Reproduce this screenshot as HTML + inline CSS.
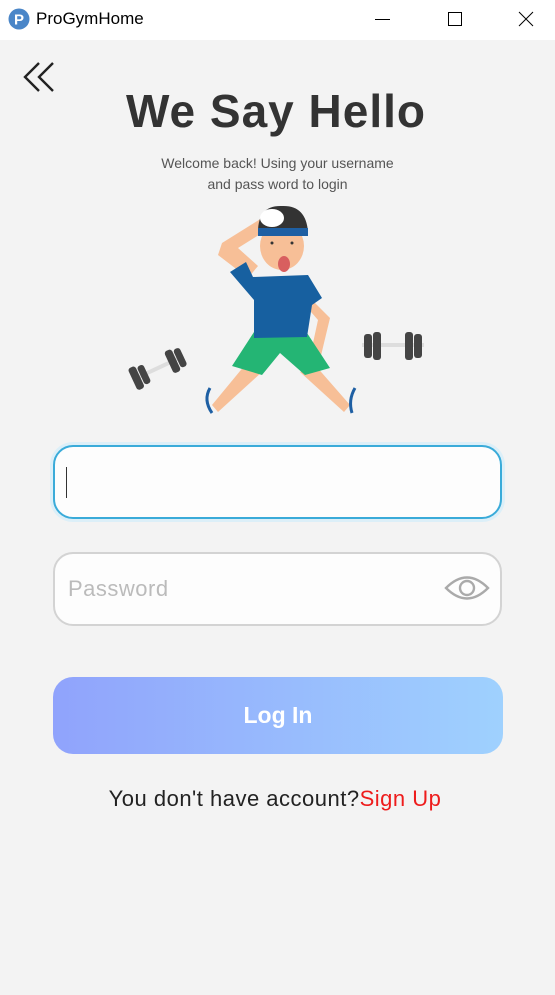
<!DOCTYPE html>
<html><head><meta charset="utf-8"><style>
*{margin:0;padding:0;box-sizing:border-box}
body{width:555px;height:995px;background:#f3f3f3;font-family:"Liberation Sans",sans-serif;position:relative;overflow:hidden}
.tb{position:absolute;left:0;top:0;width:555px;height:40px;background:#fff}
.abs{position:absolute}
.field{position:absolute;left:53px;width:449px;height:74px;border-radius:20px;background:#fdfdfd}
</style></head><body>
<div class="tb">
<svg class="abs" style="left:8px;top:8px" width="22" height="22"><circle cx="11" cy="11" r="10.5" fill="#4a86c8"/><text x="11" y="16.5" font-family="Liberation Sans" font-weight="bold" font-size="15" fill="#fff" text-anchor="middle">P</text></svg>
<div class="abs" style="left:36px;top:9px;font-size:17px;color:#000">ProGymHome</div>
<svg class="abs" style="left:370px;top:10px" width="170" height="20"><line x1="5" y1="9.5" x2="20" y2="9.5" stroke="#000"/><rect x="78.5" y="2.5" width="13" height="13" fill="none" stroke="#000"/><path d="M149 2L163 16M163 2L149 16" stroke="#000"/></svg>
</div>
<svg class="abs" style="left:22px;top:60px" width="36" height="34"><path d="M17 3L3 17L17 31M31 3L17 17L31 31" stroke="#222" stroke-width="2.4" fill="none"/></svg>
<div class="abs" style="left:0;width:552px;top:84px;text-align:center;font-size:46px;font-weight:bold;color:#333;letter-spacing:1px">We Say Hello</div>
<div class="abs" style="left:0;width:555px;top:153px;text-align:center;font-size:14px;line-height:21px;color:#555">Welcome back! Using your username<br>and pass word to login</div>
<svg class="abs" style="left:0;top:0" width="555" height="430">
<g transform="rotate(-25 158 368)" fill="#444"><rect x="130" y="366" width="56" height="4" fill="#ddd"/><rect x="130" y="356" width="8" height="24" rx="3"/><rect x="139" y="358" width="7" height="20" rx="3"/><rect x="170" y="356" width="8" height="24" rx="3"/><rect x="179" y="358" width="7" height="20" rx="3"/></g>
<rect x="362" y="343" width="62" height="4" fill="#ddd"/>
<rect x="364" y="334" width="8" height="24" rx="3" fill="#444"/><rect x="373" y="332" width="8" height="28" rx="3" fill="#444"/>
<rect x="405" y="332" width="8" height="28" rx="3" fill="#444"/><rect x="414" y="334" width="8" height="24" rx="3" fill="#444"/>
<path d="M245 365L212 405L218 412L262 372Z" fill="#f7bf97"/>
<path d="M315 365L350 405L344 412L300 372Z" fill="#f7bf97"/>
<path d="M210 388Q203 400 212 413" stroke="#1e5fa3" stroke-width="3" fill="none"/>
<path d="M355 388Q348 400 352 413" stroke="#1e5fa3" stroke-width="3" fill="none"/>
<path d="M248 278L218 255L222 243L262 218L270 228L238 248L258 266Z" fill="#f7bf97"/>
<path d="M312 300L330 318L318 368L308 366L318 320L305 305Z" fill="#f7bf97"/>
<path d="M254 332L307 333L330 368L305 375L280 353L262 375L232 366Z" fill="#24b574"/>
<path d="M253 277L308 275L322 298L312 305L307 337L254 338L254 300L230 272L246 262Z" fill="#1760a0"/>
<ellipse cx="282" cy="246" rx="22" ry="24" fill="#f7bf97"/>
<path d="M258 232Q258 205 282 206Q306 205 308 232Z" fill="#333"/>
<rect x="258" y="228" width="50" height="8" fill="#1e5fa3"/>
<ellipse cx="272" cy="218" rx="12" ry="9" fill="#fff"/>
<ellipse cx="284" cy="264" rx="6" ry="8" fill="#d85f5f"/>
<circle cx="272" cy="243" r="1.5" fill="#333"/><circle cx="292" cy="243" r="1.5" fill="#333"/>
</svg>
<div class="field" style="top:445px;border:2px solid #3aabd9;box-shadow:0 0 0 3px #dceff8"></div>
<div class="abs" style="left:66px;top:467px;width:1px;height:31px;background:#333"></div>
<div class="field" style="top:552px;border:2px solid #d3d3d3"></div>
<div class="abs" style="left:68px;top:576px;font-size:22px;color:#bbb;letter-spacing:0.5px">Password</div>
<svg class="abs" style="left:444px;top:573px" width="46" height="30"><path d="M2 15Q23 -6 44 15Q23 36 2 15Z" fill="none" stroke="#aaa" stroke-width="2.4"/><circle cx="23" cy="15" r="7" fill="none" stroke="#aaa" stroke-width="2.4"/></svg>
<div class="abs" style="left:53px;top:677px;width:450px;height:77px;border-radius:20px;background:linear-gradient(90deg,#90a3fc,#9fd1fe);color:#fff;font-weight:bold;font-size:23px;text-align:center;line-height:77px">Log In</div>
<div class="abs" style="left:0;width:550px;top:786px;text-align:center;font-size:22px;letter-spacing:0.5px;color:#222">You don't have account?<span style="color:#ee1c1c">Sign Up</span></div>
</body></html>
